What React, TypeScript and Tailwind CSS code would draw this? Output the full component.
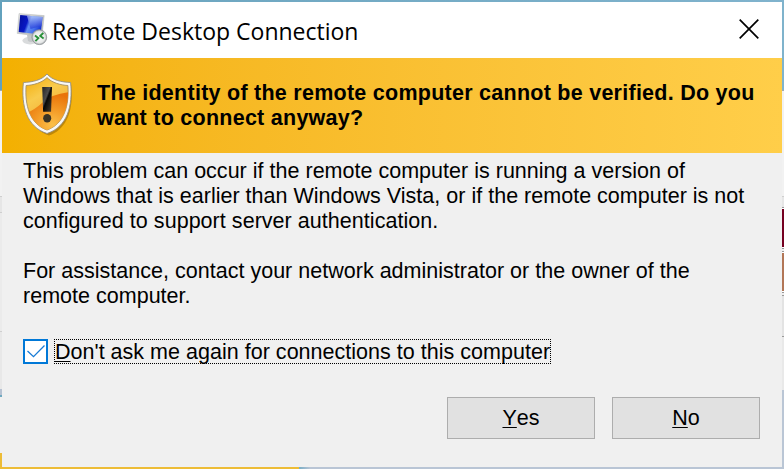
import type { ReactNode } from 'react';

type Strip = { size: string; color: string };

const leftEdge: Strip[] = [
  { size: 'h-[88px]', color: 'bg-[#62a1bd]' },
  { size: 'h-px', color: 'bg-[#a0a9b0]' },
  { size: 'h-[105px]', color: 'bg-[#f2f2f2]' },
  { size: 'h-px', color: 'bg-[#cfcfcf]' },
  { size: 'h-[15px]', color: 'bg-[#e6e6e6]' },
  { size: 'h-px', color: 'bg-[#cfcfcf]' },
  { size: 'h-[118px]', color: 'bg-[#ebebeb]' },
  { size: 'h-px', color: 'bg-[#cfcfcf]' },
  { size: 'h-[57px]', color: 'bg-[#e8e8e8]' },
  { size: 'h-[6px]', color: 'bg-[#b7c2d2]' },
  { size: 'h-[2px]', color: 'bg-[#6ea8bf]' },
  { size: 'h-[56px]', color: 'bg-[#f0f0f0]' },
  { size: 'h-[14px]', color: 'bg-[#edbc36]' },
];

const rightEdge: Strip[] = [
  { size: 'h-[88px]', color: 'bg-[#7fb3cc]' },
  { size: 'h-px', color: 'bg-[#a0a9b0]' },
  { size: 'h-[105px]', color: 'bg-[#f2f2f2]' },
  { size: 'h-px', color: 'bg-[#cfcfcf]' },
  { size: 'h-[10px]', color: 'bg-[#e6e6e6]' },
  { size: 'h-px', color: 'bg-[#999]' },
  { size: 'h-px', color: 'bg-white' },
  { size: 'h-[38px]', color: 'bg-[#750020]' },
  { size: 'h-px', color: 'bg-white' },
  { size: 'h-px', color: 'bg-[#999]' },
  { size: 'h-[2px]', color: 'bg-[#eee]' },
  { size: 'h-px', color: 'bg-[#999]' },
  { size: 'h-px', color: 'bg-white' },
  { size: 'h-[38px]', color: 'bg-[#b27656]' },
  { size: 'h-px', color: 'bg-white' },
  { size: 'h-px', color: 'bg-[#999]' },
  { size: 'h-[2px]', color: 'bg-[#eee]' },
  { size: 'h-px', color: 'bg-[#999]' },
  { size: 'h-[40px]', color: 'bg-[#e3e3e3]' },
  { size: 'h-px', color: 'bg-[#999]' },
  { size: 'h-[53px]', color: 'bg-[#e9e9e9]' },
  { size: 'h-[78px]', color: 'bg-[#bac6d5]' },
];

function Edge({ strips }: { strips: Strip[] }) {
  return (
    <div className="flex h-[465px] w-[2px] shrink-0 flex-col overflow-hidden">
      {strips.map((s, i) => (
        <div key={i} className={`${s.size} ${s.color} w-full shrink-0`} />
      ))}
    </div>
  );
}

function ComputerIcon() {
  return (
    <svg className="mt-[11px] h-[36px] w-[32px] shrink-0" viewBox="0 0 32 36">
      <defs>
        <linearGradient id="screen" x1="0" y1="0.2" x2="1" y2="0.5">
          <stop offset="0" stopColor="#0410a0" />
          <stop offset=".36" stopColor="#0718c4" />
          <stop offset=".48" stopColor="#5f8df2" />
          <stop offset=".7" stopColor="#4a76ee" />
          <stop offset="1" stopColor="#1230d0" />
        </linearGradient>
        <linearGradient id="sheen" x1="0" y1="0" x2="0" y2="1">
          <stop offset="0" stopColor="#d7e6ff" stopOpacity=".65" />
          <stop offset="1" stopColor="#1020d0" stopOpacity=".5" />
        </linearGradient>
        <linearGradient id="bezel" x1="0" y1="0" x2="1" y2="1">
          <stop offset="0" stopColor="#e4e4e2" />
          <stop offset="1" stopColor="#a8acaf" />
        </linearGradient>
        <radialGradient id="disc">
          <stop offset="0" stopColor="#fff" />
          <stop offset=".75" stopColor="#e6e8e8" />
          <stop offset="1" stopColor="#a9adaf" />
        </radialGradient>
      </defs>
      <ellipse cx="14" cy="27.6" rx="7.6" ry="3.8" fill="#d9dbdc" />
      <path d="M11 22h7l1 6q-4 2-7 0z" fill="#c3c6c8" />
      <path d="M3 .6 28.2 2.6 26 23.4 1.2 20.4Z" fill="url(#bezel)" stroke="#b8bcbd" strokeWidth=".5" />
      <path d="M4.2 2.1 26.6 3.9 24.6 21.6 2.7 19Z" fill="url(#screen)" />
      <path d="M11 2.7 26.6 3.9 25.6 13 14.5 16Z" fill="url(#sheen)" />
      <circle cx="23.3" cy="24.2" r="7.4" fill="url(#disc)" stroke="#909598" strokeWidth=".8" />
      <path d="m19 22.6 3.4 2.6-3 3M27.3 19.8l-3.1 3.2 3.4 2.5" fill="none" stroke="#299139" strokeWidth="1.9" />
    </svg>
  );
}

function ShieldIcon() {
  return (
    <svg className="mt-[15px] h-[64px] w-[52px] shrink-0" viewBox="0 0 54 64" preserveAspectRatio="none">
      <defs>
        <linearGradient id="shieldTop" x1="0" y1="0" x2=".5" y2="1">
          <stop offset="0" stopColor="#f3ad08" />
          <stop offset=".4" stopColor="#f8cb4e" />
          <stop offset="1" stopColor="#f2a52c" />
        </linearGradient>
        <radialGradient id="shieldLow" cx=".62" cy=".8" r=".75">
          <stop offset="0" stopColor="#fbc04a" />
          <stop offset=".5" stopColor="#f39a26" />
          <stop offset="1" stopColor="#e97409" />
        </radialGradient>
        <linearGradient id="mark" x1="0" y1="0" x2="1" y2="1">
          <stop offset="0" stopColor="#222" />
          <stop offset=".4" stopColor="#4d4d4d" />
          <stop offset=".5" stopColor="#080808" />
          <stop offset="1" stopColor="#4b4030" />
        </linearGradient>
        <clipPath id="face">
          <path d="M27 5C22 10 13 12.5 5.5 12.5 3.7 31 9 51 27 57 45 51 50.3 31 48.5 12.5 41 12.5 32 10 27 5Z" />
        </clipPath>
      </defs>
      <path d="M27 2C20 9 12 10 3 11 0 34 7 54 28 62 48 55 54 34 51 11 42 11 34 8 27 2Z" fill="#704900" opacity=".4" transform="translate(1 .6)" />
      <path d="M27 1C21 7.5 12 9 2.5 9.5 0 33 6 54 27 60.5 48 54 54 33 51.5 9.5 42 9 33 7.5 27 1Z" fill="#f8f8f7" stroke="#918f86" strokeWidth=".9" />
      <path d="M27 4.6C22 9.6 13 12.2 5.3 12.5 3.8 32 9 51 27 57 45 51 50.2 32 48.7 12.5 41 12.2 32 9.6 27 4.6Z" fill="url(#shieldTop)" stroke="#a58f62" strokeWidth=".9" />
      <g clipPath="url(#face)">
        <path d="M4 41Q14 37 23 29T50 19V60H5Z" fill="url(#shieldLow)" />
      </g>
      <path d="M22 14h10.2l-1 24.8h-8.2Z" fill="url(#mark)" />
      <circle cx="27.2" cy="45.2" r="4.2" fill="#3a3426" />
    </svg>
  );
}

function Line({ className, children }: { className?: string; children?: ReactNode }) {
  return (
    <div className="h-[25px] whitespace-nowrap">
      <span className={className}>{children}</span>
    </div>
  );
}

function DialogButton({ accessKey, rest }: { accessKey: string; rest: string }) {
  return (
    <button className="flex h-[42px] w-[148px] items-center justify-center border border-[#adadad] bg-[#e1e1e1] text-[21.5px] leading-[25px] [font-kerning:none]">
      <span className="mt-px"><span className="underline decoration-1 underline-offset-[2px]">{accessKey}</span>{rest}</span>
    </button>
  );
}

export default function App() {
  return (
    <div className="h-[469px] w-[784px] overflow-hidden font-['Liberation_Sans',Arial,sans-serif] text-black">
      <div className="h-[2px] bg-linear-to-r from-[#68a3bd] to-[#80b3cd]" />
      <div className="flex">
        <Edge strips={leftEdge} />
        <main className="flex h-[465px] w-[780px] flex-col bg-[#f0f0f0]">
          <header className="flex h-[56px] bg-white pl-[14px]">
            <ComputerIcon />
            <h1 className="ml-[4px] mt-[13px] w-[687px] whitespace-nowrap font-['Open_Sans','Noto_Sans',sans-serif] text-[23px] leading-[32px]">Remote Desktop Connection</h1>
            <svg className="mt-[17px] h-[20px] w-[20px] shrink-0" viewBox="0 0 20 20">
              <path d="m.7.7 18.6 18.6M19.3.7.7 19.3" stroke="black" strokeWidth="1.7" />
            </svg>
          </header>
          <section className="flex h-[95px] bg-linear-to-r from-[#f3b000] to-[#ffce49] pl-[19px]">
            <ShieldIcon />
            <div className="ml-[24px] mt-[23px] text-[21.5px] font-bold leading-[25px] tracking-[0.26px]">
              <Line>The identity of the remote computer cannot be verified. Do you</Line>
              <Line>want to connect anyway?</Line>
            </div>
          </section>
          <section className="pl-[21px] pt-[6px] text-[21.5px] leading-[25px] tracking-[0.015px]">
            <Line>This problem can occur if the remote computer is running a version of</Line>
            <Line>Windows that is earlier than Windows Vista, or if the remote computer is not</Line>
            <Line className="tracking-[0.04px]">configured to support server authentication.</Line>
            <Line />
            <Line>For assistance, contact your network administrator or the owner of the</Line>
            <Line>remote computer.</Line>
          </section>
          <label className="ml-[21px] mt-[30px] flex items-center text-[21.5px] leading-[25px]">
            <span className="flex h-[25px] w-[25px] border-2 border-[#0078d7] bg-white">
              <svg className="h-[21px] w-[21px]" viewBox="0 0 21 21"><path d="m2.5 10 6 5.7L19.5 4.5" fill="none" stroke="#187bd5" strokeWidth="1.3" /></svg>
            </span>
            <span className="ml-[6px] h-[25px] w-[497px] whitespace-nowrap border border-dotted border-black leading-[24px] tracking-[0.02px]">
              <span className="underline decoration-1 underline-offset-[2px]">D</span>on't ask me again for connections to this computer
            </span>
          </label>
          <footer className="mt-[33px] flex justify-end gap-[17px] pr-[22px]">
            <DialogButton accessKey="Y" rest="es" />
            <DialogButton accessKey="N" rest="o" />
          </footer>
        </main>
        <Edge strips={rightEdge} />
      </div>
      <div className="flex h-[2px]">
        <div className="w-[299px] bg-[#edbc36]" />
        <div className="w-[11px] bg-linear-to-r from-[#78adc5] to-[#b7c4d5]" />
        <div className="flex-1 bg-[#b9c5d5]" />
      </div>
    </div>
  );
}
